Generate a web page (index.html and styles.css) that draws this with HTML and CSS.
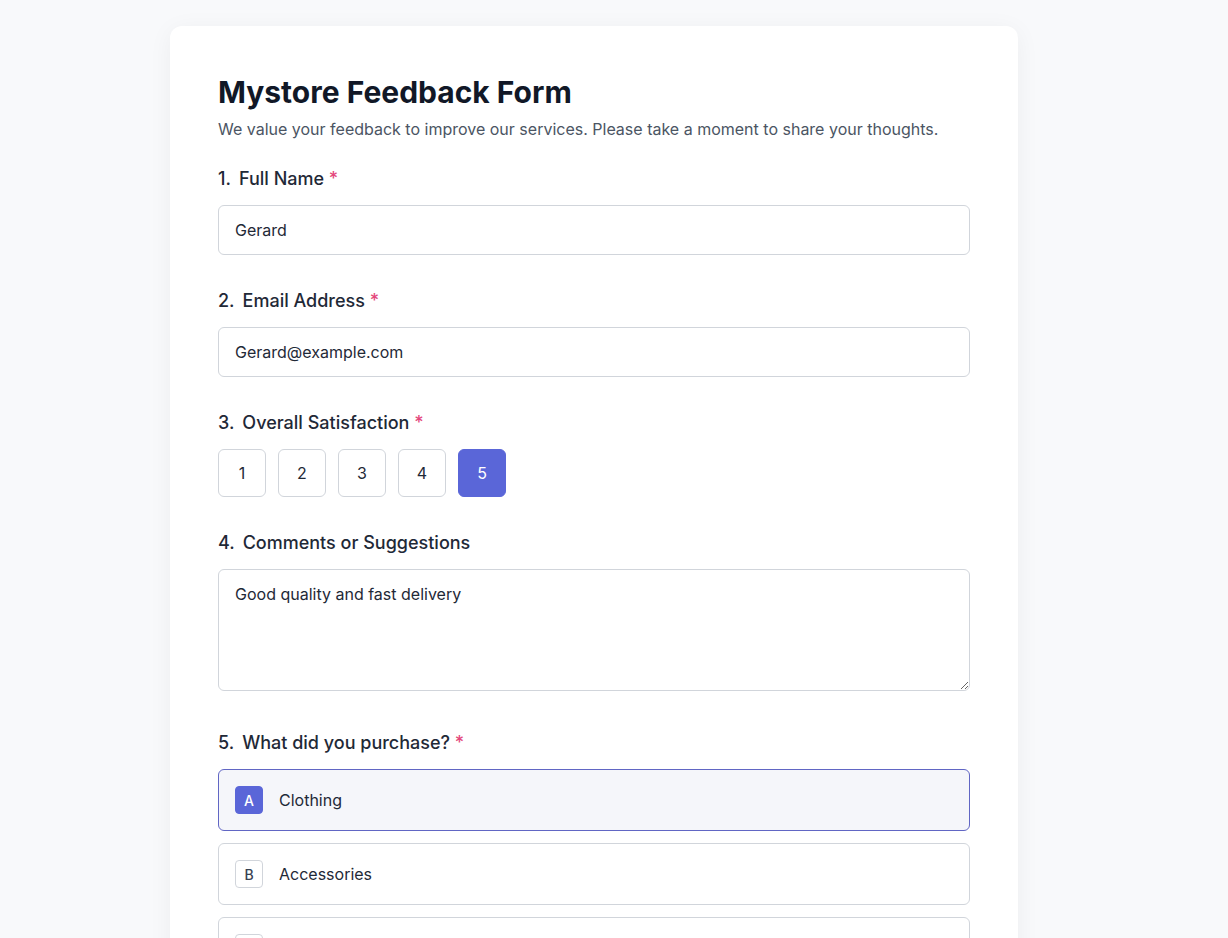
FILE: index.html
```html
<!DOCTYPE html>
<html lang="en">
<head>
<meta charset="utf-8">
<title>Mystore Feedback Form</title>
<link rel="stylesheet" href="styles.css">
</head>
<body>
<div class="page">
  <form class="card">
    <h1 class="title">Mystore Feedback Form</h1>
    <p class="subtitle">We value your feedback to improve our services. Please take a moment to share your thoughts.</p>

    <div class="field">
      <label class="label"><span class="num">1.</span>Full Name <span class="req">*</span></label>
      <input class="input" type="text" value="Gerard">
    </div>

    <div class="field">
      <label class="label"><span class="num">2.</span>Email Address <span class="req">*</span></label>
      <input class="input" type="text" value="Gerard@example.com">
    </div>

    <div class="field">
      <label class="label"><span class="num">3.</span>Overall Satisfaction <span class="req">*</span></label>
      <div class="rating">
        <button type="button" class="rate">1</button>
        <button type="button" class="rate">2</button>
        <button type="button" class="rate">3</button>
        <button type="button" class="rate">4</button>
        <button type="button" class="rate rate-active">5</button>
      </div>
    </div>

    <div class="field field-textarea">
      <label class="label"><span class="num">4.</span>Comments or Suggestions</label>
      <textarea class="textarea">Good quality and fast delivery</textarea>
    </div>

    <div class="field">
      <label class="label"><span class="num">5.</span>What did you purchase? <span class="req">*</span></label>
      <div class="options">
        <div class="option option-active"><span class="key">A</span><span class="opt-text">Clothing</span></div>
        <div class="option"><span class="key">B</span><span class="opt-text">Accessories</span></div>
        <div class="option"><span class="key">C</span><span class="opt-text">Footwear</span></div>
        <div class="option"><span class="key">D</span><span class="opt-text">Other</span></div>
      </div>
    </div>
  </form>
</div>
</body>
</html>
```
FILE: styles.css
```css
* { box-sizing: border-box; }
html, body { margin: 0; padding: 0; }
body {
  background: #f8f9fb;
  font-family: Inter, "Noto Sans", "Liberation Sans", sans-serif;
  color: #1f2937;
}
.page {
  padding: 26px 0 40px 170px;
}
.card {
  width: 848px;
  background: #ffffff;
  border-radius: 12px;
  box-shadow: 0 4px 24px rgba(15, 23, 42, 0.05);
  padding: 48px 48px 48px;
}
.title {
  margin: 0;
  font-size: 30px;
  line-height: 36px;
  font-weight: 700;
  color: #111827;
}
.subtitle {
  margin: 7px 0 0;
  font-size: 16px;
  line-height: 24px;
  color: #4b5563;
}
.field { margin-top: 32px; }
.subtitle + .field { margin-top: 24px; }
.field-textarea { padding-bottom: 6px; }
.label {
  display: block;
  font-size: 18px;
  line-height: 28px;
  font-weight: 500;
  color: #1f2937;
  margin-bottom: 12px;
}
.num { margin-right: 8px; }
.req { color: #e4487c; }
.input {
  display: block;
  width: 100%;
  height: 50px;
  padding: 12px 16px;
  font-family: inherit;
  font-size: 16px;
  line-height: 24px;
  color: #1f2937;
  border: 1px solid #d1d5db;
  border-radius: 6px;
  background: #fff;
  outline: none;
}
.rating { display: flex; gap: 12px; }
.rate {
  width: 48px;
  height: 48px;
  border: 1px solid #d1d5db;
  border-radius: 6px;
  background: #fff;
  font-family: inherit;
  font-size: 16px;
  color: #1f2937;
  padding: 0;
}
.rate-active {
  background: #5a66d8;
  border-color: #5a66d8;
  color: #fff;
}
.textarea {
  display: block;
  width: 100%;
  height: 122px;
  padding: 12px 16px;
  font-family: inherit;
  font-size: 16px;
  line-height: 24px;
  color: #1f2937;
  border: 1px solid #d1d5db;
  border-radius: 6px;
  background: #fff;
  outline: none;
}
.options { display: flex; flex-direction: column; gap: 12px; }
.option {
  display: flex;
  align-items: center;
  gap: 16px;
  height: 62px;
  padding: 0 16px;
  border: 1px solid #d1d5db;
  border-radius: 6px;
  background: #fff;
  font-size: 16px;
  color: #1f2937;
}
.option-active {
  border-color: #6166c4;
  background: #f5f6fa;
}
.key {
  width: 28px;
  height: 28px;
  display: flex;
  align-items: center;
  justify-content: center;
  border: 1px solid #d1d5db;
  border-radius: 4px;
  font-size: 14px;
  font-weight: 500;
  color: #374151;
  background: #fff;
}
.option-active .key {
  background: #5a66d8;
  border-color: #5a66d8;
  color: #fff;
}
```
